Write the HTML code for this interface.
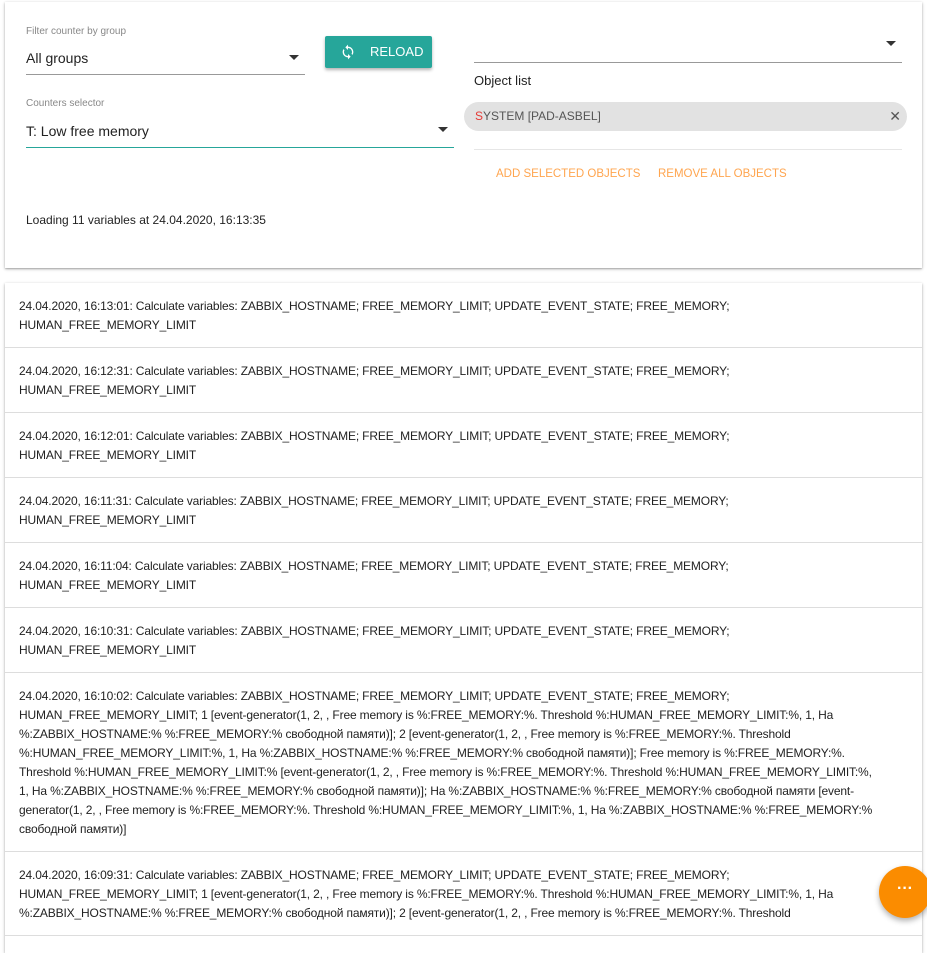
<!DOCTYPE html>
<html><head><meta charset="utf-8"><style>
*{box-sizing:border-box;margin:0;padding:0}
body{width:927px;height:938px;overflow:hidden;background:#fff;font-family:"Liberation Sans","Noto Sans CJK SC",sans-serif;color:#222;position:relative}
.card{position:absolute;left:5px;width:917px;background:#fff;box-shadow:0 1px 3px rgba(0,0,0,.3),0 1px 1px rgba(0,0,0,.14)}
.a{position:absolute;white-space:nowrap}
.lbl{font-size:10px;color:#888}
.val{font-size:14px;color:#222}
.arrow{position:absolute;width:0;height:0;border-left:5px solid transparent;border-right:5px solid transparent;border-top:5px solid #333}
.row{border-bottom:1px solid #ddd;padding:14px 0 12px 14px;font-size:12px;line-height:19px;white-space:nowrap;color:#222;letter-spacing:-0.15px}
</style></head><body>
<div class="card" style="top:2px;height:266px">
  <div class="a lbl" style="left:21px;top:24px">Filter counter by group</div>
  <div class="a val" style="left:21px;top:48px">All groups</div>
  <div class="arrow" style="left:284px;top:53px"></div>
  <div class="a" style="left:21px;top:72px;width:279px;height:1px;background:#999"></div>
  <div class="a" style="left:320px;top:34px;width:107px;height:32px;background:#26a69a;border-radius:2px;box-shadow:0 2px 3px rgba(0,0,0,.3);color:#fff;font-size:13px;line-height:32px">
    <svg style="position:absolute;left:15px;top:8px" width="16" height="16" viewBox="0 0 24 24" fill="#fff"><path d="M12 4V1L8 5l4 4V6c3.3 0 6 2.7 6 6 0 1-.25 2-.7 2.8l1.5 1.5C19.5 15 20 13.6 20 12c0-4.4-3.6-8-8-8zm0 14c-3.3 0-6-2.7-6-6 0-1 .25-2 .7-2.8L5.2 7.7C4.5 9 4 10.4 4 12c0 4.4 3.6 8 8 8v3l4-4-4-4v3z"/></svg>
    <span style="position:absolute;left:45px">RELOAD</span></div>
  <div class="a lbl" style="left:21px;top:96px">Counters selector</div>
  <div class="a val" style="left:21px;top:121px">T: Low free memory</div>
  <div class="arrow" style="left:433px;top:125px"></div>
  <div class="a" style="left:21px;top:145px;width:428px;height:1px;background:#26a69a"></div>
  <div class="a" style="left:21px;top:211px;font-size:12px">Loading 11 variables at 24.04.2020, 16:13:35</div>

  <div class="arrow" style="left:881px;top:39px"></div>
  <div class="a" style="left:469px;top:60px;width:428px;height:1px;background:#999"></div>
  <div class="a" style="left:469px;top:71px;font-size:13px">Object list</div>
  <div class="a" style="left:459px;top:100px;width:443px;height:29px;background:#e2e2e2;border-radius:15px;font-size:12px;line-height:29px;color:#555">
    <span style="position:absolute;left:11px"><span style="color:#e53935">S</span>YSTEM [PAD-ASBEL]</span>
    <span style="position:absolute;right:6px;font-size:14px;color:#555">✕</span></div>
  <div class="a" style="left:469px;top:147px;width:428px;height:1px;background:#e6e6e6"></div>
  <div class="a" style="left:491px;top:166px;font-size:11.5px;color:#ffa54f">ADD SELECTED OBJECTS</div>
  <div class="a" style="left:653px;top:166px;font-size:11.5px;color:#ffa54f">REMOVE ALL OBJECTS</div>
</div>

<div class="card" style="top:283px;height:670px">
<div class="row">24.04.2020, 16:13:01: Calculate variables: ZABBIX_HOSTNAME; FREE_MEMORY_LIMIT; UPDATE_EVENT_STATE; FREE_MEMORY;<br>HUMAN_FREE_MEMORY_LIMIT</div>
<div class="row">24.04.2020, 16:12:31: Calculate variables: ZABBIX_HOSTNAME; FREE_MEMORY_LIMIT; UPDATE_EVENT_STATE; FREE_MEMORY;<br>HUMAN_FREE_MEMORY_LIMIT</div>
<div class="row">24.04.2020, 16:12:01: Calculate variables: ZABBIX_HOSTNAME; FREE_MEMORY_LIMIT; UPDATE_EVENT_STATE; FREE_MEMORY;<br>HUMAN_FREE_MEMORY_LIMIT</div>
<div class="row">24.04.2020, 16:11:31: Calculate variables: ZABBIX_HOSTNAME; FREE_MEMORY_LIMIT; UPDATE_EVENT_STATE; FREE_MEMORY;<br>HUMAN_FREE_MEMORY_LIMIT</div>
<div class="row">24.04.2020, 16:11:04: Calculate variables: ZABBIX_HOSTNAME; FREE_MEMORY_LIMIT; UPDATE_EVENT_STATE; FREE_MEMORY;<br>HUMAN_FREE_MEMORY_LIMIT</div>
<div class="row">24.04.2020, 16:10:31: Calculate variables: ZABBIX_HOSTNAME; FREE_MEMORY_LIMIT; UPDATE_EVENT_STATE; FREE_MEMORY;<br>HUMAN_FREE_MEMORY_LIMIT</div>
<div class="row">24.04.2020, 16:10:02: Calculate variables: ZABBIX_HOSTNAME; FREE_MEMORY_LIMIT; UPDATE_EVENT_STATE; FREE_MEMORY;<br>HUMAN_FREE_MEMORY_LIMIT; 1 [event-generator(1, 2, , Free memory is %:FREE_MEMORY:%. Threshold %:HUMAN_FREE_MEMORY_LIMIT:%, 1, На<br>%:ZABBIX_HOSTNAME:% %:FREE_MEMORY:% свободной памяти)]; 2 [event-generator(1, 2, , Free memory is %:FREE_MEMORY:%. Threshold<br>%:HUMAN_FREE_MEMORY_LIMIT:%, 1, На %:ZABBIX_HOSTNAME:% %:FREE_MEMORY:% свободной памяти)]; Free memory is %:FREE_MEMORY:%.<br>Threshold %:HUMAN_FREE_MEMORY_LIMIT:% [event-generator(1, 2, , Free memory is %:FREE_MEMORY:%. Threshold %:HUMAN_FREE_MEMORY_LIMIT:%,<br>1, На %:ZABBIX_HOSTNAME:% %:FREE_MEMORY:% свободной памяти)]; На %:ZABBIX_HOSTNAME:% %:FREE_MEMORY:% свободной памяти [event-<br>generator(1, 2, , Free memory is %:FREE_MEMORY:%. Threshold %:HUMAN_FREE_MEMORY_LIMIT:%, 1, На %:ZABBIX_HOSTNAME:% %:FREE_MEMORY:%<br>свободной памяти)]</div>
<div class="row">24.04.2020, 16:09:31: Calculate variables: ZABBIX_HOSTNAME; FREE_MEMORY_LIMIT; UPDATE_EVENT_STATE; FREE_MEMORY;<br>HUMAN_FREE_MEMORY_LIMIT; 1 [event-generator(1, 2, , Free memory is %:FREE_MEMORY:%. Threshold %:HUMAN_FREE_MEMORY_LIMIT:%, 1, На<br>%:ZABBIX_HOSTNAME:% %:FREE_MEMORY:% свободной памяти)]; 2 [event-generator(1, 2, , Free memory is %:FREE_MEMORY:%. Threshold</div>
</div>

<div class="a" style="left:879px;top:866px;width:52px;height:52px;border-radius:50%;background:#fb8c00;box-shadow:0 3px 6px rgba(0,0,0,.3);color:#fff;font-size:16px;font-weight:bold;text-align:center;line-height:46px">···</div>
</body></html>
